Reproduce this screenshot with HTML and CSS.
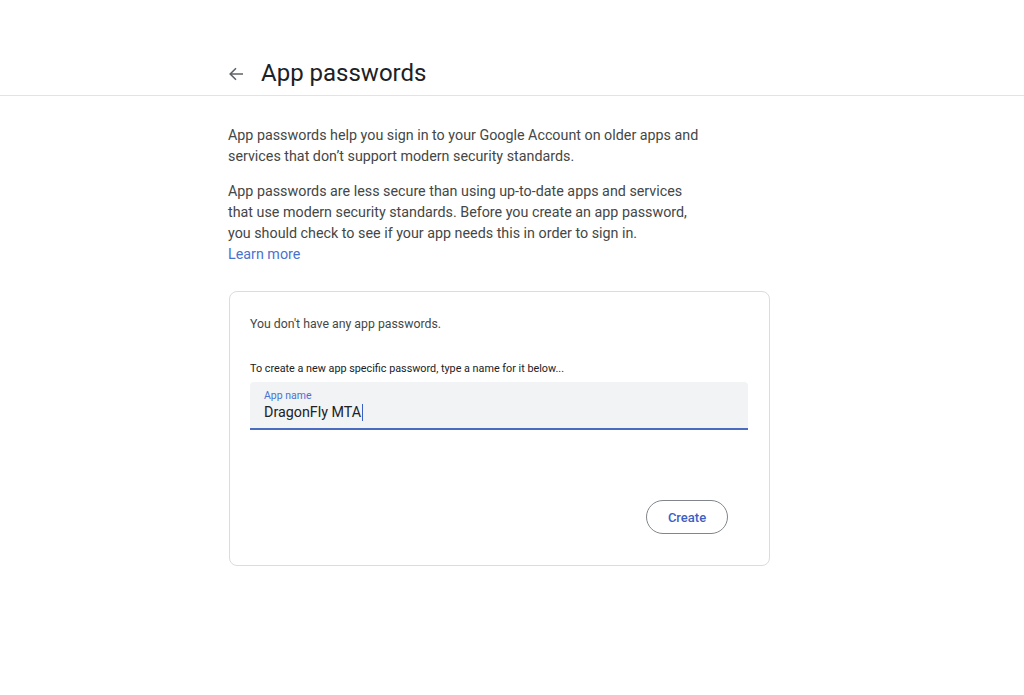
FILE: index.html
```html
<!DOCTYPE html>
<html lang="en">
<head>
    <meta charset="UTF-8">
    <meta name="viewport" content="width=device-width, initial-scale=1.0">
    <title>App passwords</title>
    <link rel="stylesheet" href="styles.css">
</head>
<body>
    <div class="header">
        <div class="header_in">
            <span class="back">
                <svg width="16" height="16" viewBox="0 0 16 16">
                    <path d="M15 8H2.5M8 2.2L2.2 8 8 13.8" fill="none" stroke="#5f6368" stroke-width="1.6"/>
                </svg>
            </span>
            <h1 class="titre">App passwords</h1>
        </div>
    </div>

    <div class="main">
        <p class="texte">App passwords help you sign in to your Google Account on older apps and services that don’t support modern security standards.</p>
        <p class="texte">App passwords are less secure than using up-to-date apps and services that use modern security standards. Before you create an app password, you should check to see if your app needs this in order to sign in.<br><a href="#" class="lien">Learn more</a></p>

        <div class="carte">
            <p class="vide">You don't have any app passwords.</p>
            <p class="consigne">To create a new app specific password, type a name for it below...</p>
            <div class="champ">
                <span class="champ_label">App name</span>
                <span class="champ_valeur">DragonFly MTA<span class="curseur"></span></span>
            </div>
            <div class="parent_btn">
                <button class="btn_create">Create</button>
            </div>
        </div>
    </div>
</body>
</html>
```

FILE: styles.css
```css
body {
    margin: 0;
    padding: 0;
    font-family: Roboto, "Liberation Sans", sans-serif;
    background: #ffffff;
    color: #3c4043;
}

.header {
    height: 96px;
    box-sizing: border-box;
    border-bottom: 1px solid #e3e3e3;
    padding: 51px 0 0 228px;
}

.header_in {
    display: flex;
    align-items: center;
    height: 44px;
}

.back {
    display: flex;
    width: 33px;
    margin-top: 1px;
}

.titre {
    margin: 0;
    font-size: 24px;
    font-weight: 400;
    color: #202124;
}

.main {
    padding: 29px 0 0 228px;
    width: 542px;
}

.texte {
    margin: 0 0 14px;
    font-size: 14.3px;
    line-height: 21px;
    color: #444746;
    width: 480px;
}

.lien {
    color: #4a72d0;
    text-decoration: none;
}

.carte {
    margin-top: 26px;
    margin-left: 1px;
    border: 1px solid #dadce0;
    border-radius: 8px;
    padding: 23px 21px 31px 20px;
}

.vide {
    margin: 0;
    font-size: 12.3px;
    line-height: 18px;
    color: #444746;
}

.consigne {
    margin: 29px 0 0;
    font-size: 10.8px;
    line-height: 14px;
    color: #202124;
}

.champ {
    margin-top: 6px;
    height: 48px;
    box-sizing: border-box;
    background: #f1f3f4;
    border-bottom: 2px solid #4a6cc0;
    border-radius: 4px 4px 0 0;
    padding: 7px 14px 0;
    display: flex;
    flex-direction: column;
}

.champ_label {
    font-size: 10.5px;
    line-height: 13px;
    color: #4a72d0;
}

.champ_valeur {
    font-size: 14.3px;
    line-height: 20px;
    color: #202124;
    display: flex;
    align-items: center;
}

.curseur {
    display: inline-block;
    width: 1px;
    height: 17px;
    background: #3c5fc4;
    margin-left: 1px;
}

.parent_btn {
    display: flex;
    justify-content: flex-end;
    margin-top: 70px;
    padding-right: 20px;
}

.btn_create {
    font-family: Roboto, "Liberation Sans", sans-serif;
    font-size: 13px;
    font-weight: 500;
    color: #3c5fc4;
    background: #ffffff;
    border: 1px solid #80868b;
    border-radius: 18px;
    width: 82px;
    height: 34px;
    cursor: pointer;
}
```
